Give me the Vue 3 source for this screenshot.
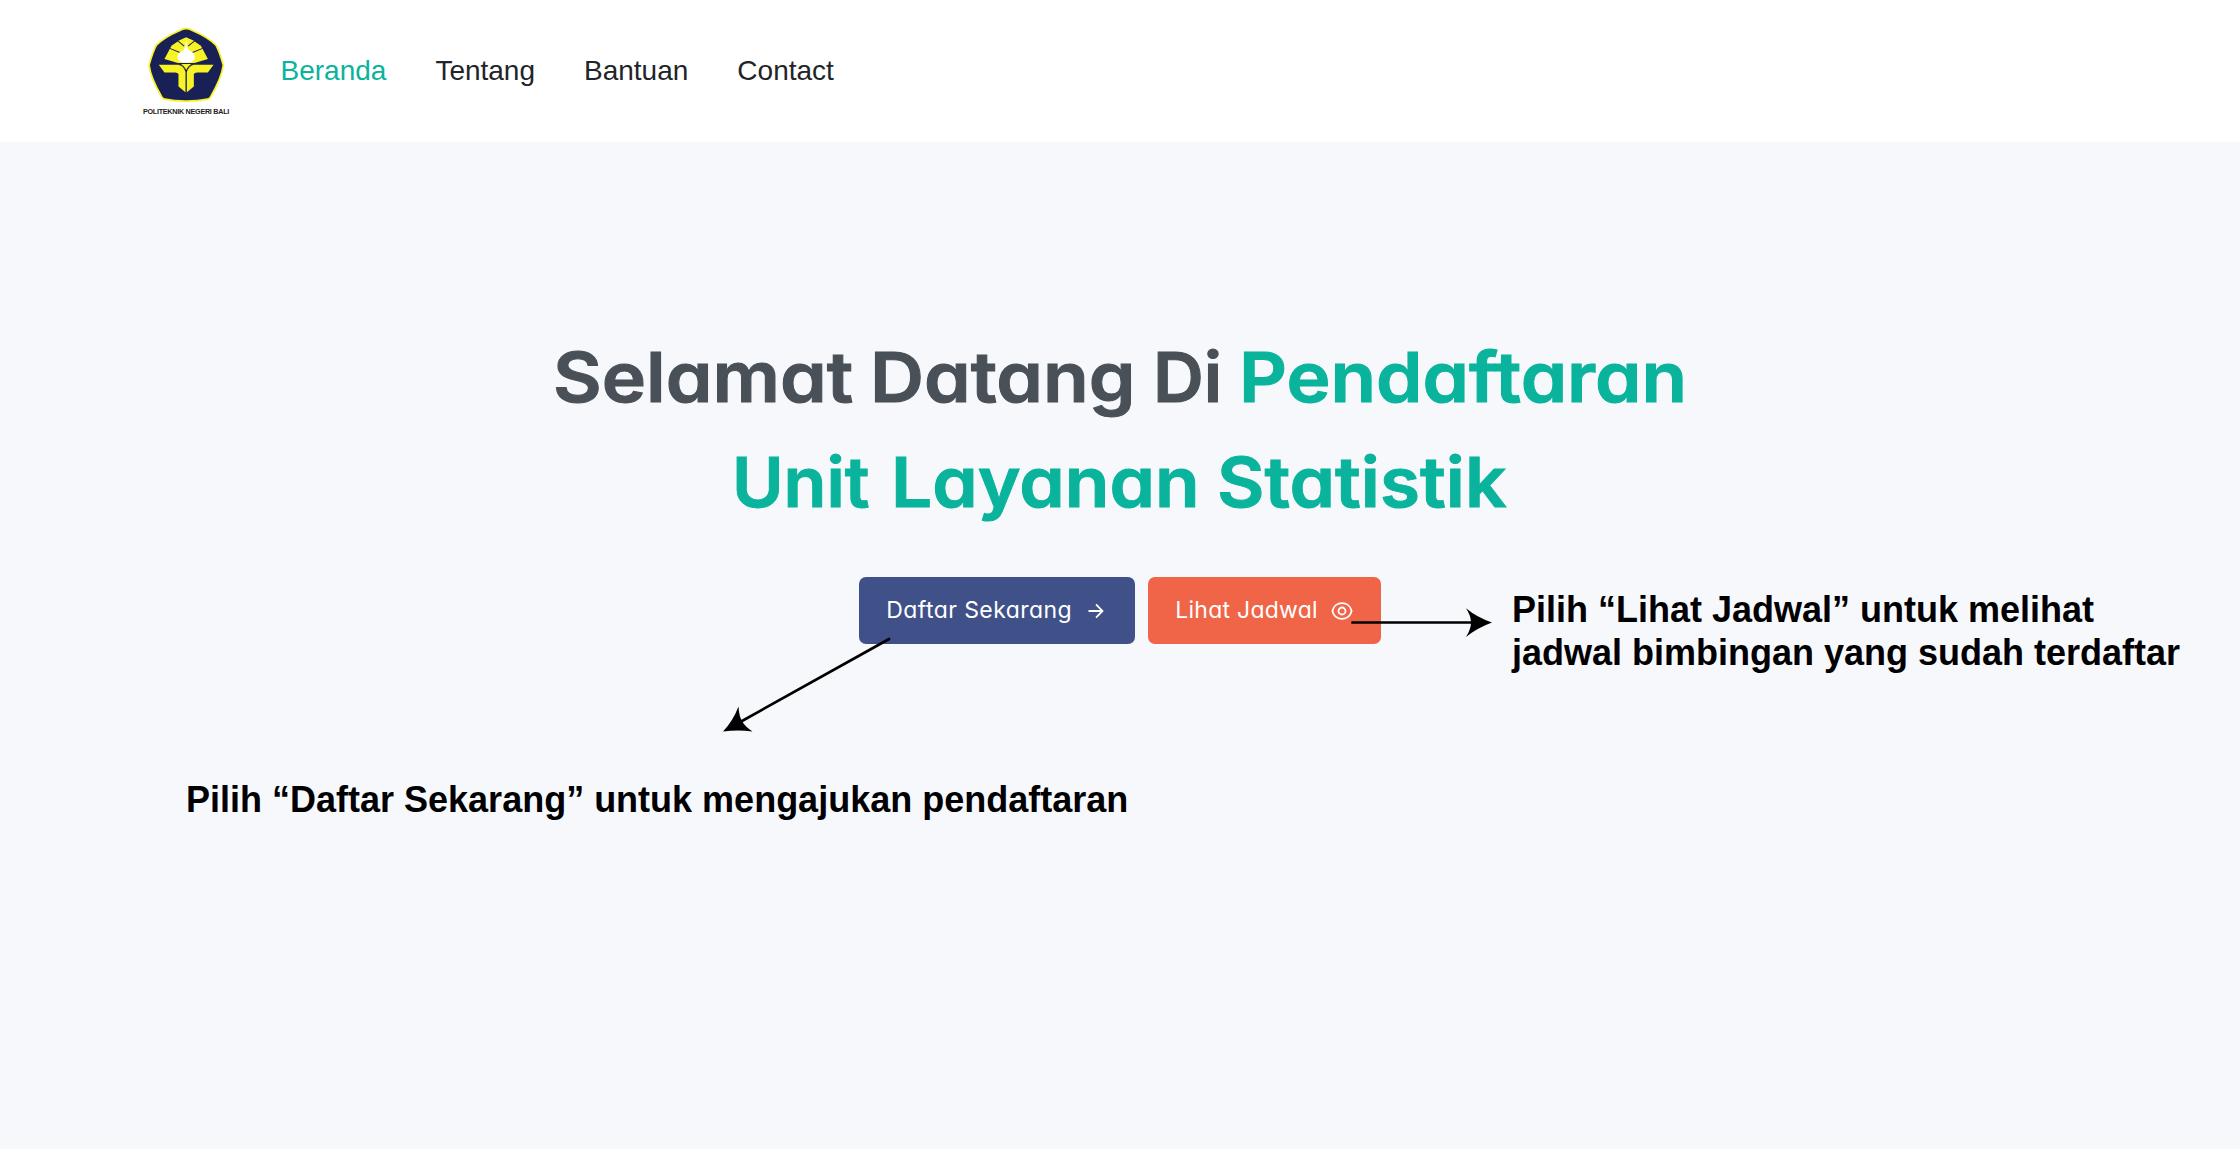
<script setup>
const links = [
  { label: 'Beranda', active: true },
  { label: 'Tentang' },
  { label: 'Bantuan' },
  { label: 'Contact' },
]
</script>

<template>
  <div class="page">
    <header class="navbar">
      <div class="brand">
        <svg class="emblem" viewBox="54 34 230 226" aria-hidden="true">
          <path d="M168 38Q178 39 190 46Q232 64 257 88Q268 108 279 148Q274 187 241 243Q238 249 232 250Q203 256 168 256Q133 256 104 250Q98 249 95 243Q62 187 57 148Q68 108 79 88Q104 64 146 46Q158 39 168 38Z" fill="#192055" stroke="#f8f325" stroke-width="5" />
          <g fill="#f8f325">
            <path d="M103 130L124 90L148 74L168 65L188 74L212 90L233 130L193 142H143Z" />
            <path d="M86 147H145Q160 152 166 168V229L145 212V175Q143 170 135 170H103Z" />
            <path d="M250 147H191Q176 152 170 168V229L191 212V175Q193 170 201 170H233Z" />
            <path d="M148 145H188L168 164Z" />
          </g>
          <path d="M119 98L151 111M142 75L162 91M217 98L185 111M194 75L174 91M145 143Q160 147 168 166Q176 147 191 143" fill="none" stroke="#192055" stroke-width="3" />
          <path d="M168 72Q171 86 172 97Q174 104 183 107Q194 112 194 122Q194 135 179 140H157Q142 135 142 122Q142 112 153 107Q162 104 164 97Q165 86 168 72Z" fill="#fff" />
        </svg>
        <span class="brand-name">POLITEKNIK NEGERI BALI</span>
      </div>
      <nav class="links">
        <a v-for="l in links" :key="l.label" :class="{ active: l.active }">{{ l.label }}</a>
      </nav>
    </header>

    <main class="hero">
      <h1>
        <span class="line first"><span class="w1">Selamat</span><span class="w2">Datang</span><span class="w3">Di</span><span class="w4 accent">Pendaftaran</span></span>
        <span class="line second accent"><span class="w5">Unit</span><span class="w6">Layanan</span><span class="w7">Statistik</span></span>
      </h1>
      <div class="actions">
        <button class="btn primary">
          <span>Daftar Sekarang</span>
          <svg width="16" height="16" viewBox="0 0 16 16" fill="none" stroke="#fff" stroke-width="1.8"><path d="M0.5 8H14.2M8 1.3L14.5 8L8 14.7" /></svg>
        </button>
        <button class="btn danger">
          <span>Lihat Jadwal</span>
          <svg width="22" height="18" viewBox="0 0 22 18" fill="none" stroke="#fff" stroke-width="1.8"><path d="M1.4 9C2.5 4.200 6.500 1.200 11 1.200S19.500 4.200 20.600 9C19.500 13.800 15.500 16.800 11 16.800S2.500 13.800 1.400 9Z" /><circle cx="11" cy="9" r="3.500" /></svg>
        </button>
      </div>
    </main>

    <svg class="arrows" width="2240" height="1149" viewBox="0 0 2240 1149" aria-hidden="true">
      <path d="M1351.3 622.5H1475M890 638.5L738 723.2" stroke="#000" stroke-width="2.7" />
      <path d="M1492 622.5Q1477 628 1466 637Q1471 629 1471 622.500Q1471 616 1466 608.300Q1477 617.500 1492 622.500Z" />
      <path d="M723 731.500Q733 721 738.500 706.500Q739 716 742 721.300Q745.500 727 752.500 731.500Q738 729.500 723 731.500Z" />
    </svg>
    <p class="note note-schedule">Pilih “Lihat Jadwal” untuk melihat<br />jadwal bimbingan yang sudah terdaftar</p>
    <p class="note note-register">Pilih “Daftar Sekarang” untuk mengajukan pendaftaran</p>
  </div>
</template>

<style>
body { margin: 0; }
</style>

<style scoped>
.page {
  position: relative;
  width: 2240px;
  height: 1149px;
  overflow: hidden;
  background: #f7f8fc;
  font-family: Inter, sans-serif;
}
.navbar {
  display: flex;
  box-sizing: border-box;
  height: 142px;
  padding-left: 142px;
  background: #fff;
}
.brand {
  display: flex;
  flex-direction: column;
  align-items: center;
  width: 88px;
  padding-top: 26.500px;
}
.emblem { width: 77px; height: 75.500px; }
.brand-name {
  margin-top: 4.500px;
  font: bold 7.200px/10px "Liberation Sans", Arial, sans-serif;
  letter-spacing: -0.260px;
  white-space: nowrap;
  color: #222;
}
.links {
  display: flex;
  gap: 49px;
  margin-left: 50.500px;
  padding-top: 55px;
  font: 28px/32px "Liberation Sans", Arial, sans-serif;
  color: #212529;
}
.links .active { color: #0ab39c; }
.hero {
  display: flex;
  flex-direction: column;
  padding-top: 183px;
}
h1 {
  margin: 0;
  font-size: 69px;
  font-weight: 600;
  line-height: 105px;
  font-feature-settings: "cv11";
  color: #495057;
  -webkit-text-stroke: 1px currentColor;
}
.line { display: flex; white-space: nowrap; }
.line > span { flex: none; transform-origin: left; }
.first { padding-left: 552.500px; }
.second { padding-left: 732px; }
.accent { color: #0ab39c; }
.w1 { width: 317px; transform: scaleX(1.086); }
.w2 { width: 283.500px; transform: scaleX(1.084); }
.w3 { width: 86px; transform: scaleX(1.02); }
.w4 { transform: scaleX(1.079); }
.w5 { width: 158.500px; transform: scaleX(1.016); }
.w6 { width: 326.500px; transform: scaleX(1.057); }
.w7 { transform: scaleX(1.058); }
.actions {
  display: flex;
  gap: 13.500px;
  margin-top: 42.200px;
  padding-left: 859.300px;
}
.btn {
  display: flex;
  align-items: center;
  box-sizing: border-box;
  height: 67.300px;
  padding: 0 0 2px 27px;
  border: 0;
  border-radius: 7px;
  font: 23px/34px Inter, sans-serif;
  font-feature-settings: "cv11";
  letter-spacing: 0.250px;
  text-align: left;
  color: #fff;
  white-space: nowrap;
}
.btn svg { flex: none; margin-top: 3px; }
.primary { width: 275.500px; background: #405189; letter-spacing: 0.420px; }
.primary span { width: 202px; }
.danger { width: 232.500px; background: #f06548; }
.danger span { width: 156px; }
.arrows { position: absolute; inset: 0; pointer-events: none; }
.note {
  position: absolute;
  margin: 0;
  font: bold 36px/43px "Liberation Sans", Arial, sans-serif;
  white-space: nowrap;
  color: #000;
}
.note-schedule { left: 1512px; top: 588px; }
.note-register { left: 186px; top: 778px; }
</style>
